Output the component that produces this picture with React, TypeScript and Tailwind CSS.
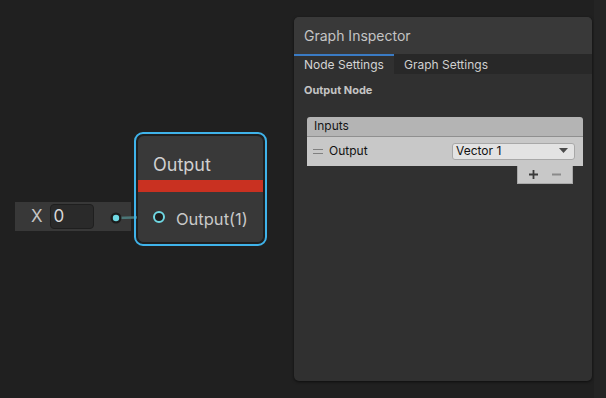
import React from 'react';

const font = { fontFamily: 'Inter, "Noto Sans", sans-serif' };

function Canvas() {
  return (
    <>
      {/* X property node */}
      <div className="absolute left-[15px] top-[202px] w-[116px] h-[29px] bg-[#383838] flex items-center">
        <span className="ml-[16px] text-[17px] text-[#c4c4c4]">X</span>
        <div className="ml-[7px] w-[44px] h-[25px] rounded-[4px] bg-[#2a2a2a] border border-[#1f1f1f] flex items-center pl-[3px] text-[17px] text-[#d8d8d8]">
          0
        </div>
      </div>

      {/* edge between ports */}
      <svg className="absolute left-0 top-0" width="606" height="398">
        <line x1="116" y1="218" x2="152" y2="217" stroke="#4b7677" strokeWidth="2.5" />
        <circle cx="116" cy="218" r="5.5" fill="#1c1c1c" />
        <circle cx="116" cy="218" r="3.2" fill="#6fd8e3" />
      </svg>

      {/* Output node */}
      <div className="absolute left-[134px] top-[132px] w-[133px] h-[114px] rounded-[9px] border-2 border-[#3fb3ea] p-[1px]">
        <div className="w-full h-full rounded-[7px] bg-[#393939] border border-[#1e1e1e] overflow-hidden flex flex-col">
          <div className="h-[44px] flex items-end pl-[15px] pb-[2px] text-[18px] text-[#d0d0d0]">Output</div>
          <div className="h-[12px] bg-[#c93121]" />
          <div className="flex-1 bg-[#383838] flex items-center pl-[15px] pt-[2px]">
            <div className="w-[12px] h-[12px] rounded-full border-2 border-[#6fd8e3] bg-[#1f1f1f] -mt-[2px]" />
            <span className="ml-[11px] mt-[3px] text-[16.5px] text-[#c8c8c8]">Output(1)</span>
          </div>
        </div>
      </div>
    </>
  );
}

function Inspector() {
  return (
    <div className="absolute left-[294px] top-[17px] w-[298px] h-[364px] bg-[#303030] rounded-[5px] shadow-[0_1px_3px_rgba(0,0,0,0.6)] overflow-hidden flex flex-col">
      <div className="h-[37px] bg-[#393939] flex items-center pl-[10px] text-[14px] text-[#c4c4c4]">Graph Inspector</div>
      <div className="h-[20px] bg-[#282828] flex text-[12px]">
        <div className="w-[100px] bg-[#303030] border-t-2 border-[#3a7bc4] pl-[10px] text-[#d4d4d4] flex items-center leading-none">
          Node Settings
        </div>
        <div className="pl-[10px] text-[#d0d0d0] flex items-center leading-none pt-[2px]">Graph Settings</div>
      </div>
      <div className="pl-[10px] pt-[8px] text-[11px] font-bold text-[#c4c4c4]">Output Node</div>

      <div className="mt-[18px] ml-[13px] w-[276px] flex flex-col">
        <div className="h-[20px] bg-[#b4b4b4] rounded-t-[3px] border-b border-[#8f8f8f] flex items-center pl-[7px] text-[12px] text-[#151515]">
          Inputs
        </div>
        <div className="h-[29px] bg-[#c8c8c8] flex items-center pl-[6px] pr-[8px]">
          <div className="flex flex-col gap-[3px] w-[10px]">
            <div className="h-px bg-[#808080]" />
            <div className="h-px bg-[#808080]" />
          </div>
          <span className="ml-[6px] text-[12px] text-[#111]">Output</span>
          <div className="ml-auto w-[123px] h-[17px] bg-[#e3e3e3] border border-[#a8a8a8] rounded-[3px] flex items-center pl-[3px] pr-[6px] text-[12px] text-[#111]">
            Vector 1
            <svg className="ml-auto" width="9" height="6" viewBox="0 0 9 6">
              <path d="M0 0 L9 0 L4.5 5 Z" fill="#4a4a4a" />
            </svg>
          </div>
        </div>
        <div className="self-end mr-[10px] w-[56px] h-[18px] bg-[#c8c8c8] border border-t-0 border-[#a8a8a8] flex items-center justify-around px-[4px]">
          <svg width="11" height="11" viewBox="0 0 11 11">
            <path d="M5.5 1 V10 M1 5.5 H10" stroke="#3a3a3a" strokeWidth="1.8" />
          </svg>
          <svg width="11" height="11" viewBox="0 0 11 11">
            <path d="M1 5.5 H10" stroke="#8a8a8a" strokeWidth="1.8" />
          </svg>
        </div>
      </div>
    </div>
  );
}

export default function App() {
  return (
    <div className="relative w-[606px] h-[398px] bg-[#202020] overflow-hidden" style={font}>
      <div className="absolute left-[594px] top-0 w-[12px] h-full bg-[#242424]" />
      <Canvas />
      <Inspector />
    </div>
  );
}
